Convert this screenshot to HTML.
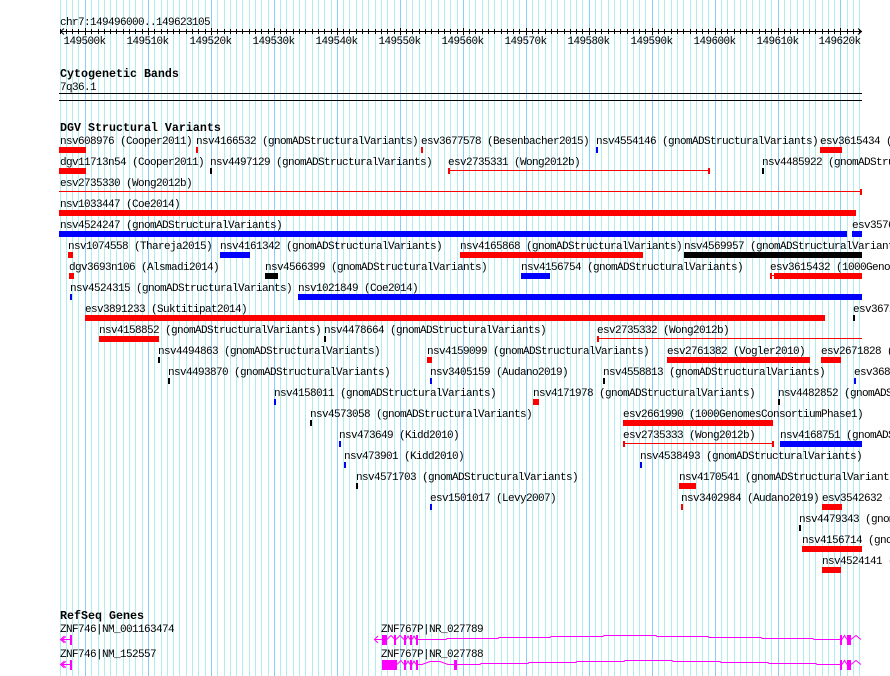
<!DOCTYPE html>
<html><head><meta charset="utf-8"><title>Genome browser</title>
<style>
html,body{margin:0;padding:0;background:#fff;width:890px;height:676px;overflow:hidden}
svg{display:block}
text{font-family:"Liberation Mono",monospace;font-size:11px;letter-spacing:-0.6px;fill:#000;white-space:pre}
text.b{font-weight:bold;font-size:11.67px;letter-spacing:0}
.c rect{shape-rendering:crispEdges}
</style></head><body>
<svg xmlns="http://www.w3.org/2000/svg" width="890" height="676" viewBox="0 0 890 676">
<defs>
<path id="minor" d="M60.5 0v676M66.5 0v676M72.5 0v676M78.5 0v676M91.5 0v676M98.5 0v676M104.5 0v676M110.5 0v676M116.5 0v676M123.5 0v676M129.5 0v676M135.5 0v676M142.5 0v676M154.5 0v676M161.5 0v676M167.5 0v676M173.5 0v676M179.5 0v676M186.5 0v676M192.5 0v676M198.5 0v676M205.5 0v676M217.5 0v676M224.5 0v676M230.5 0v676M236.5 0v676M242.5 0v676M249.5 0v676M255.5 0v676M261.5 0v676M268.5 0v676M280.5 0v676M286.5 0v676M293.5 0v676M299.5 0v676M305.5 0v676M312.5 0v676M318.5 0v676M324.5 0v676M331.5 0v676M343.5 0v676M349.5 0v676M356.5 0v676M362.5 0v676M368.5 0v676M375.5 0v676M381.5 0v676M387.5 0v676M394.5 0v676M406.5 0v676M412.5 0v676M419.5 0v676M425.5 0v676M431.5 0v676M438.5 0v676M444.5 0v676M450.5 0v676M457.5 0v676M469.5 0v676M475.5 0v676M482.5 0v676M488.5 0v676M494.5 0v676M501.5 0v676M507.5 0v676M513.5 0v676M519.5 0v676M532.5 0v676M538.5 0v676M545.5 0v676M551.5 0v676M557.5 0v676M564.5 0v676M570.5 0v676M576.5 0v676M582.5 0v676M595.5 0v676M601.5 0v676M608.5 0v676M614.5 0v676M620.5 0v676M627.5 0v676M633.5 0v676M639.5 0v676M645.5 0v676M658.5 0v676M664.5 0v676M671.5 0v676M677.5 0v676M683.5 0v676M690.5 0v676M696.5 0v676M702.5 0v676M708.5 0v676M721.5 0v676M727.5 0v676M734.5 0v676M740.5 0v676M746.5 0v676M752.5 0v676M759.5 0v676M765.5 0v676M771.5 0v676M784.5 0v676M790.5 0v676M797.5 0v676M803.5 0v676M809.5 0v676M815.5 0v676M822.5 0v676M828.5 0v676M834.5 0v676M847.5 0v676M853.5 0v676M859.5 0v676"/>
<path id="major" d="M85.5 0v676M148.5 0v676M211.5 0v676M274.5 0v676M337.5 0v676M400.5 0v676M463.5 0v676M526.5 0v676M589.5 0v676M652.5 0v676M715.5 0v676M778.5 0v676M840.5 0v676"/>
<clipPath id="t1"><rect x="0" y="29" width="890" height="5"/></clipPath>
<clipPath id="t2"><rect x="0" y="28" width="890" height="7"/></clipPath>
</defs>

<g fill="none" stroke-width="1" shape-rendering="crispEdges">
<use href="#minor" stroke="#afeeee"/>
<use href="#major" stroke="#87cefa"/>
<g clip-path="url(#t1)"><use href="#minor" stroke="#000"/></g>
<g clip-path="url(#t2)"><use href="#major" stroke="#000"/></g>
</g>
<g fill="none" stroke="#000" stroke-width="1">
<path d="M60 31.5H862" shape-rendering="crispEdges"/>
<path d="M64 28.5L60.5 31.5L64 34.5M858 28.5L861.5 31.5L858 34.5"/>
</g>

<text x="60" y="25">chr7:149496000..149623105</text>
<text x="63.5" y="44">149500k</text>
<text x="126.5" y="44">149510k</text>
<text x="189.5" y="44">149520k</text>
<text x="252.5" y="44">149530k</text>
<text x="315.5" y="44">149540k</text>
<text x="378.5" y="44">149550k</text>
<text x="441.5" y="44">149560k</text>
<text x="504.5" y="44">149570k</text>
<text x="567.5" y="44">149580k</text>
<text x="630.5" y="44">149590k</text>
<text x="693.5" y="44">149600k</text>
<text x="756.5" y="44">149610k</text>
<text x="818.5" y="44">149620k</text>

<text class="b" x="60" y="77">Cytogenetic Bands</text>
<text x="60" y="90">7q36.1</text>
<g class="c"><rect x="59" y="93" width="803" height="1" fill="#000"/><rect x="59" y="100" width="803" height="1" fill="#000"/></g>

<text class="b" x="60" y="131">DGV Structural Variants</text>

<g class="c" fill="#f00">
<rect x="59" y="147" width="27" height="6"/><rect x="196" y="147" width="2" height="6"/><rect x="421" y="147" width="2" height="6"/><rect x="820" y="147" width="22" height="6"/>
<rect x="59" y="168" width="27" height="6"/>
<rect x="448" y="168" width="2" height="6"/><rect x="448" y="170" width="261" height="1"/><rect x="708" y="168" width="2" height="6"/>
<rect x="59" y="191" width="803" height="1"/><rect x="860" y="189" width="2" height="6"/>
<rect x="59" y="210" width="797" height="6"/>
<rect x="68" y="252" width="5" height="6"/><rect x="460" y="252" width="183" height="6"/>
<rect x="69" y="273" width="5" height="6"/><rect x="770" y="273" width="2" height="6"/><rect x="770" y="275" width="4" height="1"/><rect x="774" y="273" width="88" height="6"/>
<rect x="85" y="315" width="740" height="6"/>
<rect x="99" y="336" width="60" height="6"/><rect x="597" y="336" width="2" height="6"/><rect x="597" y="338" width="265" height="1"/>
<rect x="427" y="357" width="5" height="6"/><rect x="667" y="357" width="143" height="6"/><rect x="821" y="357" width="20" height="6"/>
<rect x="533" y="399" width="6" height="6"/>
<rect x="623" y="420" width="150" height="6"/>
<rect x="623" y="441" width="2" height="6"/><rect x="623" y="443" width="151" height="1"/><rect x="772" y="441" width="2" height="6"/>
<rect x="679" y="483" width="17" height="6"/>
<rect x="681" y="504" width="2" height="6"/><rect x="822" y="504" width="20" height="6"/>
<rect x="802" y="546" width="60" height="6"/>
<rect x="822" y="567" width="19" height="6"/>
</g>
<g class="c" fill="#00f">
<rect x="596" y="147" width="2" height="6"/>
<rect x="59" y="231" width="788" height="6"/><rect x="852" y="231" width="10" height="6"/>
<rect x="220" y="252" width="30" height="6"/>
<rect x="521" y="273" width="29" height="6"/>
<rect x="70" y="294" width="2" height="6"/><rect x="298" y="294" width="564" height="6"/>
<rect x="430" y="378" width="2" height="6"/><rect x="854" y="378" width="2" height="6"/>
<rect x="274" y="399" width="2" height="6"/>
<rect x="339" y="441" width="2" height="6"/><rect x="780" y="441" width="82" height="6"/>
<rect x="344" y="462" width="2" height="6"/><rect x="640" y="462" width="2" height="6"/>
<rect x="430" y="504" width="2" height="6"/>
</g>
<g class="c" fill="#000">
<rect x="210" y="168" width="2" height="6"/><rect x="762" y="168" width="2" height="6"/>
<rect x="684" y="252" width="178" height="6"/>
<rect x="265" y="273" width="13" height="6"/>
<rect x="853" y="315" width="2" height="6"/>
<rect x="324" y="336" width="2" height="6"/>
<rect x="158" y="357" width="2" height="6"/>
<rect x="168" y="378" width="2" height="6"/><rect x="603" y="378" width="2" height="6"/>
<rect x="778" y="399" width="2" height="6"/>
<rect x="310" y="420" width="2" height="6"/>
<rect x="356" y="483" width="2" height="6"/>
<rect x="799" y="525" width="2" height="6"/>
</g>

<text x="60" y="144">nsv608976 (Cooper2011)</text>
<text x="196" y="144">nsv4166532 (gnomADStructuralVariants)</text>
<text x="421" y="144">esv3677578 (Besenbacher2015)</text>
<text x="596" y="144">nsv4554146 (gnomADStructuralVariants)</text>
<text x="820" y="144">esv3615434 (1000Genomes)</text>
<text x="60" y="165">dgv11713n54 (Cooper2011)</text>
<text x="210" y="165">nsv4497129 (gnomADStructuralVariants)</text>
<text x="448" y="165">esv2735331 (Wong2012b)</text>
<text x="762" y="165">nsv4485922 (gnomADStructuralVariants)</text>
<text x="60" y="186">esv2735330 (Wong2012b)</text>
<text x="60" y="207">nsv1033447 (Coe2014)</text>
<text x="60" y="228">nsv4524247 (gnomADStructuralVariants)</text>
<text x="852" y="228">esv3576</text>
<text x="68" y="249">nsv1074558 (Thareja2015)</text>
<text x="220" y="249">nsv4161342 (gnomADStructuralVariants)</text>
<text x="460" y="249">nsv4165868 (gnomADStructuralVariants)</text>
<text x="684" y="249">nsv4569957 (gnomADStructuralVariants)</text>
<text x="69" y="270">dgv3693n106 (Alsmadi2014)</text>
<text x="265" y="270">nsv4566399 (gnomADStructuralVariants)</text>
<text x="521" y="270">nsv4156754 (gnomADStructuralVariants)</text>
<text x="770" y="270">esv3615432 (1000GenomesConsortiumPhase1)</text>
<text x="70" y="291">nsv4524315 (gnomADStructuralVariants)</text>
<text x="298" y="291">nsv1021849 (Coe2014)</text>
<text x="85" y="312">esv3891233 (Suktitipat2014)</text>
<text x="853" y="312">esv3672</text>
<text x="99" y="333">nsv4158852 (gnomADStructuralVariants)</text>
<text x="324" y="333">nsv4478664 (gnomADStructuralVariants)</text>
<text x="597" y="333">esv2735332 (Wong2012b)</text>
<text x="158" y="354">nsv4494863 (gnomADStructuralVariants)</text>
<text x="427" y="354">nsv4159099 (gnomADStructuralVariants)</text>
<text x="667" y="354">esv2761382 (Vogler2010)</text>
<text x="821" y="354">esv2671828 (</text>
<text x="168" y="375">nsv4493870 (gnomADStructuralVariants)</text>
<text x="430" y="375">nsv3405159 (Audano2019)</text>
<text x="603" y="375">nsv4558813 (gnomADStructuralVariants)</text>
<text x="854" y="375">esv368</text>
<text x="274" y="396">nsv4158011 (gnomADStructuralVariants)</text>
<text x="533" y="396">nsv4171978 (gnomADStructuralVariants)</text>
<text x="778" y="396">nsv4482852 (gnomADStructuralVariants)</text>
<text x="310" y="417">nsv4573058 (gnomADStructuralVariants)</text>
<text x="623" y="417">esv2661990 (1000GenomesConsortiumPhase1)</text>
<text x="339" y="438">nsv473649 (Kidd2010)</text>
<text x="623" y="438">esv2735333 (Wong2012b)</text>
<text x="780" y="438">nsv4168751 (gnomADStructuralVariants)</text>
<text x="344" y="459">nsv473901 (Kidd2010)</text>
<text x="640" y="459">nsv4538493 (gnomADStructuralVariants)</text>
<text x="356" y="480">nsv4571703 (gnomADStructuralVariants)</text>
<text x="679" y="480">nsv4170541 (gnomADStructuralVariants)</text>
<text x="430" y="501">esv1501017 (Levy2007)</text>
<text x="681" y="501">nsv3402984 (Audano2019)</text>
<text x="822" y="501">esv3542632 (1000Genomes)</text>
<text x="799" y="522">nsv4479343 (gnomADStructuralVariants)</text>
<text x="802" y="543">nsv4156714 (gnomADStructuralVariants)</text>
<text x="822" y="564">nsv4524141 (gnomADStructuralVariants)</text>

<text class="b" x="60" y="619">RefSeq Genes</text>
<text x="60" y="632">ZNF746|NM_001163474</text>
<text x="60" y="657">ZNF746|NM_152557</text>
<text x="381" y="632">ZNF767P|NR_027789</text>
<text x="381" y="657">ZNF767P|NR_027788</text>

<g class="c" fill="#f0f">
<rect x="70" y="635" width="2" height="10"/><rect x="70" y="660" width="2" height="10"/>
<rect x="382" y="635" width="5" height="10"/><rect x="394" y="635" width="2" height="10"/><rect x="404" y="635" width="2" height="10"/><rect x="410" y="635" width="2" height="10"/><rect x="416" y="635" width="2" height="10"/>
<rect x="840" y="635" width="2" height="10"/><rect x="847" y="635" width="4" height="10"/>
<rect x="382" y="660" width="15" height="10"/><rect x="404" y="660" width="2" height="10"/><rect x="410" y="660" width="2" height="10"/><rect x="416" y="660" width="2" height="10"/><rect x="454" y="660" width="3" height="10"/>
<rect x="840" y="660" width="2" height="10"/><rect x="847" y="660" width="4" height="10"/>
</g>
<g fill="none" stroke="#f0f" stroke-width="1">
<path d="M60.5 639.5H70M64.5 636L60.5 639.5L64.5 643M66 636.5L62 639.5L66 642.5"/>
<path d="M60.5 664.5H70M64.5 661L60.5 664.5L64.5 668M66 661.5L62 664.5L66 667.5"/>
<path d="M374.5 639.5H382M378 636L374.5 639.5L378 643"/>
<path d="M387 639.5L391 635.5L395 639.5M396 639.5L400 635.5L404 639.5M406 639.5L408 636L410 639.5M412 639.5L414 636L416 639.5"/>
<path d="M418 639.5H446L447 638.5H498L499 637.5H550L551 636.5H603L604 635.5H656L657 636.5H708L709 637.5H761L762 638.5H813L814 639.5H840"/>
<path d="M842 639.5L844.5 635.5L847 639.5M851 639.5L856 635.5L861 639.5"/>
<path d="M397 664.5L401 660.5L404 664.5M406 664.5L408 661L410 664.5M412 664.5L414 661L416 664.5"/>
<path d="M418 664.5H422L430 661.5H440L448 664.5H454M457 664.5H480L481 663.5H528L529 662.5H576L577 661.5H624L625 660.5H672L673 661.5H720L721 662.5H768L769 663.5H816L817 664.5H840"/>
<path d="M842 664.5L844.5 660.5L847 664.5M851 664.5L856 660.5L861 664.5"/>
</g>
</svg>
</body></html>
